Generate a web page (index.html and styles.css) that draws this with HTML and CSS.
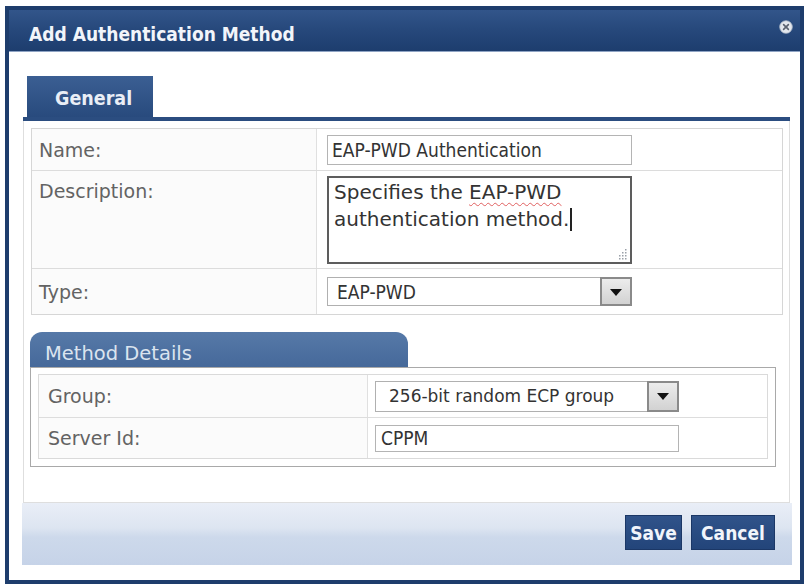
FILE: index.html
```html
<!DOCTYPE html>
<html>
<head>
<meta charset="utf-8">
<link rel="stylesheet" href="styles.css">
</head>
<body>
<div class="dialog">
  <div class="titlebar">
    <span class="title">Add Authentication Method</span>
    <span class="close">
      <svg width="14" height="14" viewBox="0 0 14 14">
        <circle cx="7" cy="7" r="6.3" fill="#e3e7ed" stroke="#aab6c6" stroke-width="0.8"/>
        <path d="M4.6 4.6 L9.4 9.4 M9.4 4.6 L4.6 9.4" stroke="#5a6270" stroke-width="1.6" stroke-linecap="round"/>
      </svg>
    </span>
  </div>
  <div class="body">
    <div class="tabs"><div class="tab">General</div></div>
    <div class="panel">
      <div class="form-table">
        <div class="row row-name">
          <div class="lbl">Name:</div>
          <div class="val"><div class="input input-name">EAP-PWD Authentication</div></div>
        </div>
        <div class="row row-desc">
          <div class="lbl lbl-top">Description:</div>
          <div class="val">
            <div class="textarea">Specifies the <span class="spell">EAP-PWD</span><br>authentication method.<span class="caret"></span>
              <svg class="grip" width="12" height="12" viewBox="0 0 12 12">
                <g fill="#9aa0a8">
                  <rect x="9" y="1" width="1.5" height="1.5"/>
                  <rect x="6" y="4" width="1.5" height="1.5"/><rect x="9" y="4" width="1.5" height="1.5"/>
                  <rect x="3" y="7" width="1.5" height="1.5"/><rect x="6" y="7" width="1.5" height="1.5"/><rect x="9" y="7" width="1.5" height="1.5"/>
                  <rect x="3" y="10" width="1.5" height="1.5"/><rect x="6" y="10" width="1.5" height="1.5"/><rect x="9" y="10" width="1.5" height="1.5"/>
                </g>
              </svg>
            </div>
          </div>
        </div>
        <div class="row row-type">
          <div class="lbl">Type:</div>
          <div class="val">
            <div class="select select-type"><span class="sel-text">EAP-PWD</span><span class="sel-btn"><span class="tri"></span></span></div>
          </div>
        </div>
      </div>

      <div class="section">
        <div class="section-head">Method Details</div>
        <div class="section-box">
          <div class="inner-table">
            <div class="irow irow-group">
              <div class="ilbl">Group:</div>
              <div class="ival">
                <div class="select select-group"><span class="sel-text">256-bit random ECP group</span><span class="sel-btn"><span class="tri"></span></span></div>
              </div>
            </div>
            <div class="irow irow-server">
              <div class="ilbl">Server Id:</div>
              <div class="ival"><div class="input input-server">CPPM</div></div>
            </div>
          </div>
        </div>
      </div>
    </div>
    <div class="footer">
      <button class="btn btn-save">Save</button>
      <button class="btn btn-cancel">Cancel</button>
    </div>
  </div>
</div>
</body>
</html>
```

FILE: styles.css
```css
html, body {
  margin: 0;
  padding: 0;
  background: #ffffff;
}

.dialog {
  margin: 6px 0 0 5px;
  width: 799px;
  height: 578px;
  box-sizing: border-box;
  border: 4px solid #1e3d6c;
  display: flex;
  flex-direction: column;
  background: #ffffff;
}

.titlebar {
  height: 42px;
  flex: none;
  display: flex;
  align-items: flex-start;
  background: linear-gradient(#32558a 0%, #27497c 45%, #1d3d6e 100%);
  border-bottom: 1px solid #8fa4c4;
  box-sizing: border-box;
}

.title {
  padding: 13px 0 0 20px;
  font-family: "DejaVu Sans Condensed", "DejaVu Sans", sans-serif;
  font-stretch: condensed;
  font-weight: bold;
  font-size: 19px;
  line-height: 22px;
  color: #f2f5fa;
}

.close {
  margin-left: auto;
  margin-right: 7px;
  margin-top: 10px;
  width: 14px;
  height: 14px;
  display: block;
}
.close svg { display: block; }

.body {
  flex: 1;
  display: flex;
  flex-direction: column;
  padding: 24px 8px 15px 13px;
}

.tabs {
  margin: 0 2px 0 1px;
  border-bottom: 4px solid #2b4d80;
  display: flex;
}

.tab {
  margin-left: 4px;
  width: 126px;
  height: 41px;
  box-sizing: border-box;
  padding: 12px 0 0 28px;
  background: linear-gradient(#3b5f93, #284a7d);
  font-family: "DejaVu Sans Condensed", "DejaVu Sans", sans-serif;
  font-stretch: condensed;
  font-weight: bold;
  font-size: 19.5px;
  line-height: 22px;
  color: #e9eef6;
}

.panel {
  flex: 1;
  margin: 0 2px 0 1px;
  border: 1px solid #dedede;
  border-top: none;
  padding: 7px 6px 0 7px;
}

/* main form table */
.form-table {
  border: 1px solid #d6d6d6;
  font-family: "DejaVu Sans", Verdana, sans-serif;
}

.row {
  display: grid;
  grid-template-columns: 285px 1fr;
  border-bottom: 1px solid #dcdcdc;
}
.row:last-child { border-bottom: none; }
.row-name { height: 41px; }
.row-desc { height: 97px; }
.row-type { height: 45px; }

.lbl {
  display: flex;
  align-items: center;
  padding-left: 7px;
  font-size: 19px;
  color: #636363;
  border-right: 1px solid #e0e0e0;
  background: #fbfbfb;
}
.lbl-top {
  align-items: flex-start;
  padding-top: 9px;
}

.val {
  display: flex;
  align-items: center;
  padding-left: 10px;
}

.input {
  box-sizing: border-box;
  border: 1px solid #b4b4b4;
  background: #ffffff;
  font-family: "DejaVu Sans Condensed", "DejaVu Sans", sans-serif;
  font-stretch: condensed;
  font-size: 19px;
  color: #333333;
  display: flex;
  align-items: center;
}

.input-name {
  width: 305px;
  height: 30px;
  padding-left: 4px;
}

.textarea {
  position: relative;
  box-sizing: border-box;
  width: 305px;
  height: 88px;
  border: 2px solid #5d5d5d;
  padding: 1px 0 0 5px;
  font-family: "DejaVu Sans", Verdana, sans-serif;
  font-size: 20px;
  line-height: 27px;
  color: #333333;
  background: #ffffff;
}

.spell {
  text-decoration: underline wavy #e06060;
  text-decoration-thickness: 1px;
  text-underline-offset: 3px;
}

.caret {
  display: inline-block;
  width: 0;
  height: 23px;
  border-left: 2px solid #222;
  vertical-align: -5px;
  margin-left: 1px;
}

.grip {
  position: absolute;
  right: 2px;
  bottom: 2px;
}

.select {
  box-sizing: border-box;
  border: 1px solid #b0b0b0;
  background: #ffffff;
  display: flex;
  align-items: stretch;
  color: #333333;
}

.select-type {
  width: 305px;
  height: 29px;
  font-family: "DejaVu Sans Condensed", "DejaVu Sans", sans-serif;
  font-stretch: condensed;
  font-size: 19px;
}
.select-type .sel-text { padding-left: 9px; }

.select-group {
  width: 304px;
  height: 31px;
  font-family: "DejaVu Sans", Verdana, sans-serif;
  font-size: 17px;
}
.select-group .sel-text { padding-left: 13px; }

.sel-text {
  flex: 1;
  display: flex;
  align-items: center;
}

.sel-btn {
  width: 32px;
  box-sizing: border-box;
  border: 2px solid #8a8a8a;
  margin: -1px -1px -1px 0;
  background: linear-gradient(#ececec, #d2d2d2);
  display: flex;
  align-items: center;
  justify-content: center;
}

.tri {
  width: 0;
  height: 0;
  border-left: 6px solid transparent;
  border-right: 6px solid transparent;
  border-top: 7px solid #111111;
  margin-top: 1px;
}

/* Method details section */
.section {
  margin-top: 17px;
  margin-left: -1px;
  width: 746px;
}

.section-head {
  width: 378px;
  height: 35px;
  box-sizing: border-box;
  border-radius: 12px 12px 0 0;
  background: linear-gradient(#5679a8, #46699a);
  padding: 10px 0 0 15px;
  font-family: "DejaVu Sans", Verdana, sans-serif;
  font-size: 19.5px;
  line-height: 24px;
  color: #dbe4ef;
}

.section-box {
  border: 1px solid #a9a9a9;
  padding: 6px 7px 7px 7px;
  background: #ffffff;
}

.inner-table {
  border: 1px solid #dadada;
  font-family: "DejaVu Sans", Verdana, sans-serif;
}

.irow {
  display: grid;
  grid-template-columns: 329px 1fr;
  border-bottom: 1px solid #dddddd;
}
.irow:last-child { border-bottom: none; }
.irow-group { height: 42px; }
.irow-server { height: 40px; }

.ilbl {
  display: flex;
  align-items: center;
  padding-left: 9px;
  font-size: 19px;
  color: #636363;
  border-right: 1px solid #e0e0e0;
  background: #fbfbfb;
}

.ival {
  display: flex;
  align-items: center;
  padding-left: 7px;
}

.input-server {
  width: 304px;
  height: 27px;
  padding-left: 5px;
}

/* footer */
.footer {
  height: 62px;
  flex: none;
  box-sizing: border-box;
  display: flex;
  justify-content: flex-end;
  align-items: flex-start;
  gap: 9px;
  padding: 12px 17px 0 0;
  background: linear-gradient(#e9eef7 0%, #dde5f1 40%, #cdd9eb 55%, #c6d3e8 100%);
}

.btn {
  height: 35px;
  box-sizing: border-box;
  border: 1px solid #1b3766;
  background: linear-gradient(#30538a, #23457a);
  color: #f1f5fb;
  font-family: "DejaVu Sans Condensed", "DejaVu Sans", sans-serif;
  font-stretch: condensed;
  font-weight: bold;
  font-size: 19px;
  padding: 0;
  margin: 0;
}
.btn-save { width: 57px; }
.btn-cancel { width: 84px; }
```
